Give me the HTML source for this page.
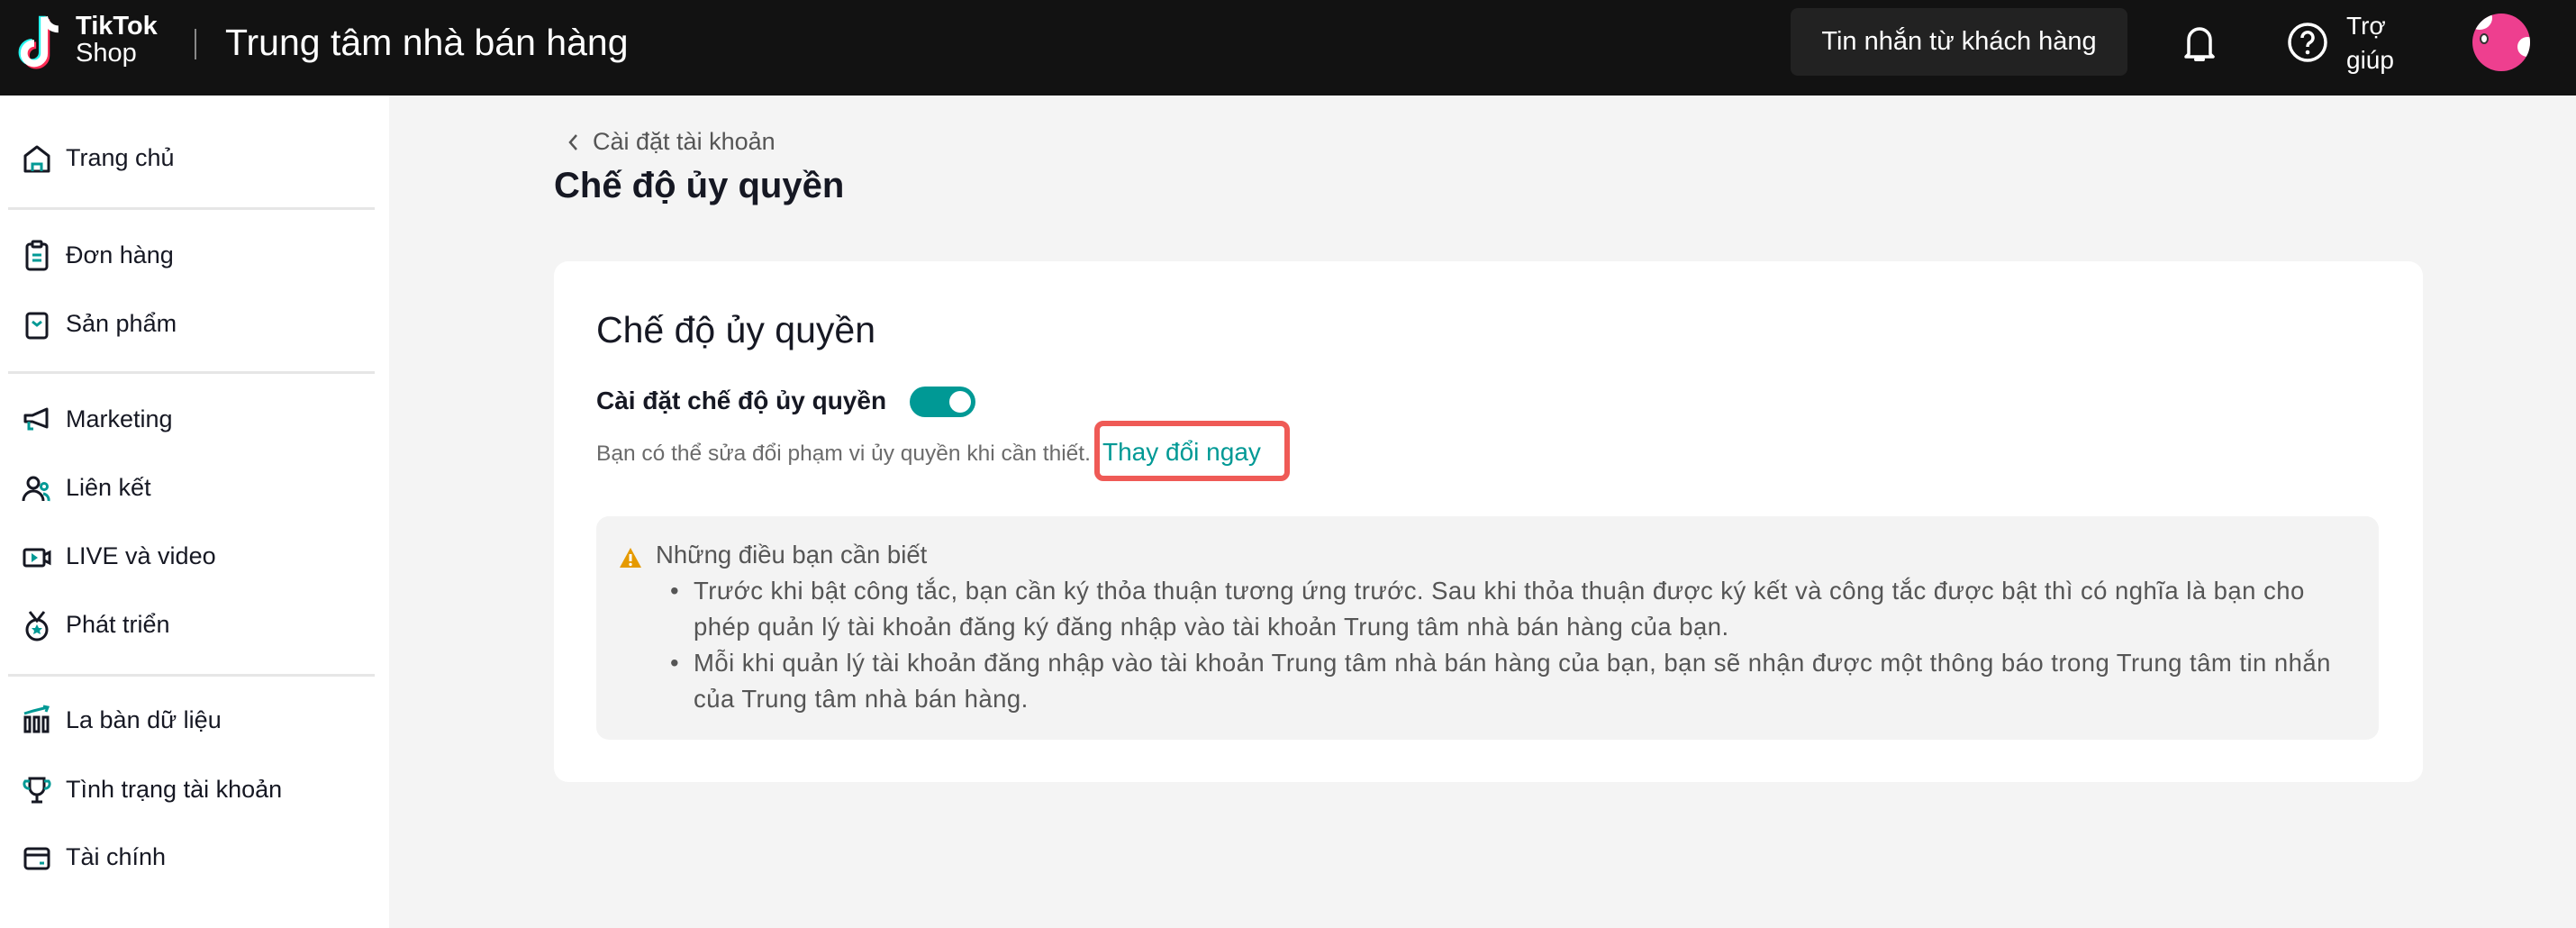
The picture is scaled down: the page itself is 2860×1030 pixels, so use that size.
<!DOCTYPE html>
<html><head><meta charset="utf-8">
<style>
*{box-sizing:border-box;margin:0;padding:0}
body{width:2860px;height:1030px;overflow:hidden;background:#f4f4f4;font-family:"Liberation Sans","DejaVu Sans",sans-serif;color:#161823;position:relative}
.hdr{position:absolute;left:0;top:0;width:2860px;height:106px;background:#121212}
.abs{position:absolute;white-space:nowrap}
.side{position:absolute;left:0;top:106px;width:432px;height:924px;background:#fff}
.item{position:absolute;left:73px;font-size:27px;color:#161823}
.ico{position:absolute;left:24px}
.div{position:absolute;left:9px;width:407px;height:3px;background:#e6e6e6}
.card{position:absolute;left:615px;top:290px;width:2075px;height:578px;background:#fff;border-radius:16px}
.info{position:absolute;left:662px;top:573px;width:1979px;height:248px;background:#f3f3f3;border-radius:14px}
.txt{font-size:27.5px;color:#555;line-height:40px}
</style></head><body>
<div class="hdr">
  <svg class="abs" style="left:20px;top:12px" width="56" height="72" viewBox="0 0 50 64">
    <path d="M26 6v36a10 10 0 1 1-10-10" fill="none" stroke="#25f4ee" stroke-width="7" transform="translate(-2,-1)"/>
    <path d="M26 6v36a10 10 0 1 1-10-10" fill="none" stroke="#fe2c55" stroke-width="7" transform="translate(2,2)"/>
    <path d="M26 6v36a10 10 0 1 1-10-10" fill="none" stroke="#fff" stroke-width="7"/>
    <path d="M26 6c2 8 8 12 14 12" fill="none" stroke="#fff" stroke-width="7"/>
  </svg>
  <div class="abs" style="left:84px;top:14px;color:#fff;font-weight:bold;font-size:29px;line-height:30px">TikTok</div>
  <div class="abs" style="left:84px;top:44px;color:#fff;font-size:29px;line-height:30px">Shop</div>
  <div class="abs" style="left:216px;top:32px;width:2px;height:34px;background:#888"></div>
  <div class="abs" style="left:250px;top:23px;color:#fff;font-size:41px;line-height:48px">Trung tâm nhà bán hàng</div>
  <div class="abs" style="left:1988px;top:9px;width:374px;height:75px;background:#222;border-radius:8px;color:#fff;font-size:29px;line-height:75px;text-align:center">Tin nhắn từ khách hàng</div>
  <svg class="abs" style="left:2422px;top:26px" width="40" height="46" viewBox="0 0 40 46"><path d="M8 34V18a12 12 0 0 1 24 0v16l3 3H5z" fill="none" stroke="#fff" stroke-width="3.5" stroke-linejoin="round"/><path d="M16 40h8" stroke="#fff" stroke-width="4" stroke-linecap="round"/></svg>
  <svg class="abs" style="left:2538px;top:23px" width="48" height="48" viewBox="0 0 48 48"><circle cx="24" cy="24" r="20" fill="none" stroke="#fff" stroke-width="3.5"/><path d="M18 19a6 6 0 1 1 9 5c-2 1-3 2-3 5" fill="none" stroke="#fff" stroke-width="3.5"/><circle cx="24" cy="35" r="2.3" fill="#fff"/></svg>
  <div class="abs" style="left:2605px;top:10px;color:#fff;font-size:28px;line-height:38px">Trợ<br>giúp</div>
  <div class="abs" style="left:2745px;top:15px;width:64px;height:64px;border-radius:50%;background:#ee3f8f;overflow:hidden"><div style="position:absolute;left:-6px;top:-8px;width:28px;height:26px;border-radius:50%;background:#fff"></div><div style="position:absolute;right:-8px;top:26px;width:22px;height:22px;border-radius:50%;background:#fff"></div><div style="position:absolute;left:8px;top:22px;width:10px;height:12px;border-radius:50%;background:#fff;border:2px solid #333"></div></div>
</div>

<div class="side">
  <svg class="ico" style="top:54px" width="34" height="34" viewBox="0 0 34 34"><path d="M4 30V13L17 3l13 10v17H4z" fill="none" stroke="#161823" stroke-width="3" stroke-linejoin="round"/><path d="M12 30v-8h10v8" fill="none" stroke="#009995" stroke-width="3"/></svg>
  <div class="item" style="top:54px">Trang chủ</div>
  <div class="div" style="top:124px"></div>
  <svg class="ico" style="top:160px" width="34" height="36" viewBox="0 0 34 36"><rect x="6" y="5" width="22" height="28" rx="3" fill="none" stroke="#161823" stroke-width="3"/><rect x="12" y="2" width="10" height="6" rx="1" fill="#fff" stroke="#161823" stroke-width="3"/><path d="M12 17h10M12 23h10" stroke="#009995" stroke-width="3"/></svg>
  <div class="item" style="top:162px">Đơn hàng</div>
  <svg class="ico" style="top:238px" width="34" height="34" viewBox="0 0 34 34"><rect x="6" y="4" width="22" height="27" rx="3" fill="none" stroke="#161823" stroke-width="3"/><path d="M12 13l5 4 5-4" fill="none" stroke="#009995" stroke-width="3"/></svg>
  <div class="item" style="top:238px">Sản phẩm</div>
  <div class="div" style="top:306px"></div>
  <svg class="ico" style="top:344px" width="34" height="34" viewBox="0 0 34 34"><path d="M4 11h8l16-7v20l-16-6H4z" fill="none" stroke="#161823" stroke-width="3" stroke-linejoin="round"/><path d="M8 18v8h5" fill="none" stroke="#009995" stroke-width="3"/></svg>
  <div class="item" style="top:344px">Marketing</div>
  <svg class="ico" style="top:420px" width="34" height="34" viewBox="0 0 34 34"><circle cx="13" cy="10" r="6" fill="none" stroke="#161823" stroke-width="3"/><path d="M2 30a11 11 0 0 1 22 0" fill="none" stroke="#161823" stroke-width="3"/><circle cx="25" cy="14" r="3.5" fill="none" stroke="#009995" stroke-width="3"/><path d="M24 22a7 7 0 0 1 6 8" fill="none" stroke="#009995" stroke-width="3"/></svg>
  <div class="item" style="top:420px">Liên kết</div>
  <svg class="ico" style="top:496px" width="34" height="34" viewBox="0 0 34 34"><rect x="3" y="8" width="22" height="18" rx="2" fill="none" stroke="#161823" stroke-width="3"/><path d="M25 14l6-3v12l-6-3" fill="none" stroke="#161823" stroke-width="3"/><path d="M11 12l7 5-7 5z" fill="#009995"/></svg>
  <div class="item" style="top:496px">LIVE và video</div>
  <svg class="ico" style="top:570px" width="34" height="38" viewBox="0 0 34 38"><path d="M9 3l8 10 8-10" fill="none" stroke="#161823" stroke-width="3"/><circle cx="17" cy="23" r="11" fill="none" stroke="#161823" stroke-width="3"/><path d="M17 17l2 4h4l-3 3 1 4-4-2-4 2 1-4-3-3h4z" fill="#009995"/></svg>
  <div class="item" style="top:572px">Phát triển</div>
  <div class="div" style="top:642px"></div>
  <svg class="ico" style="top:676px" width="34" height="34" viewBox="0 0 34 34"><path d="M4 14h5v16H4zM14 14h5v16h-5zM24 14h5v16h-5z" fill="none" stroke="#161823" stroke-width="3"/><path d="M3 10l10-3 16-4M24 2l5 1-2 5" fill="none" stroke="#009995" stroke-width="3"/></svg>
  <div class="item" style="top:678px">La bàn dữ liệu</div>
  <svg class="ico" style="top:754px" width="34" height="34" viewBox="0 0 34 34"><path d="M9 4h16v10a8 8 0 0 1-16 0z" fill="none" stroke="#161823" stroke-width="3"/><path d="M9 7H4a5 5 0 0 0 5 8M25 7h5a5 5 0 0 1-5 8" fill="none" stroke="#009995" stroke-width="3"/><path d="M17 22v8M11 30h12" stroke="#161823" stroke-width="3"/></svg>
  <div class="item" style="top:755px">Tình trạng tài khoản</div>
  <svg class="ico" style="top:830px" width="34" height="34" viewBox="0 0 34 34"><rect x="4" y="6" width="26" height="22" rx="3" fill="none" stroke="#161823" stroke-width="3"/><path d="M4 13h26" stroke="#161823" stroke-width="3"/><path d="M20 22h5" stroke="#009995" stroke-width="3"/></svg>
  <div class="item" style="top:830px">Tài chính</div>
</div>

<svg class="abs" style="left:628px;top:146px" width="16" height="24" viewBox="0 0 16 24"><path d="M12 4l-7 8 7 8" fill="none" stroke="#555" stroke-width="2.5"/></svg>
<div class="abs" style="left:658px;top:140px;font-size:27px;color:#555;line-height:34px">Cài đặt tài khoản</div>
<div class="abs" style="left:615px;top:182px;font-size:40px;font-weight:bold;line-height:48px">Chế độ ủy quyền</div>

<div class="card"></div>
<div class="abs" style="left:662px;top:342px;font-size:41px;line-height:48px">Chế độ ủy quyền</div>
<div class="abs" style="left:662px;top:428px;font-size:28px;font-weight:bold;line-height:34px;color:#161823">Cài đặt chế độ ủy quyền</div>
<div class="abs" style="left:1010px;top:429px;width:73px;height:34px;border-radius:17px;background:#009995"><div style="position:absolute;right:5px;top:5px;width:24px;height:24px;border-radius:50%;background:#fff"></div></div>
<div class="abs" style="left:662px;top:488px;font-size:24.5px;color:#6b6b6b;line-height:32px">Bạn có thể sửa đổi phạm vi ủy quyền khi cần thiết.</div>
<div class="abs" style="left:1224px;top:484px;font-size:28px;color:#009995;line-height:36px">Thay đổi ngay</div>
<div class="abs" style="left:1215px;top:467px;width:217px;height:67px;border:6px solid #ef5a56;border-radius:10px"></div>

<div class="info"></div>
<svg class="abs" style="left:686px;top:606px" width="28" height="26" viewBox="0 0 28 26"><path d="M14 2L26 24H2z" fill="#e59a00"/><path d="M14 9v8" stroke="#fff" stroke-width="3"/><circle cx="14" cy="20.5" r="1.7" fill="#fff"/></svg>
<div class="abs txt" style="left:728px;top:596px">Những điều bạn cần biết</div>
<div class="abs txt" style="left:744px;top:636px">•<br><br>•</div>
<div class="abs txt" style="left:770px;top:636px;letter-spacing:0.46px">Trước khi bật công tắc, bạn cần ký thỏa thuận tương ứng trước. Sau khi thỏa thuận được ký kết và công tắc được bật thì có nghĩa là bạn cho<br>phép quản lý tài khoản đăng ký đăng nhập vào tài khoản Trung tâm nhà bán hàng của bạn.<br>Mỗi khi quản lý tài khoản đăng nhập vào tài khoản Trung tâm nhà bán hàng của bạn, bạn sẽ nhận được một thông báo trong Trung tâm tin nhắn<br>của Trung tâm nhà bán hàng.</div>
</body></html>
